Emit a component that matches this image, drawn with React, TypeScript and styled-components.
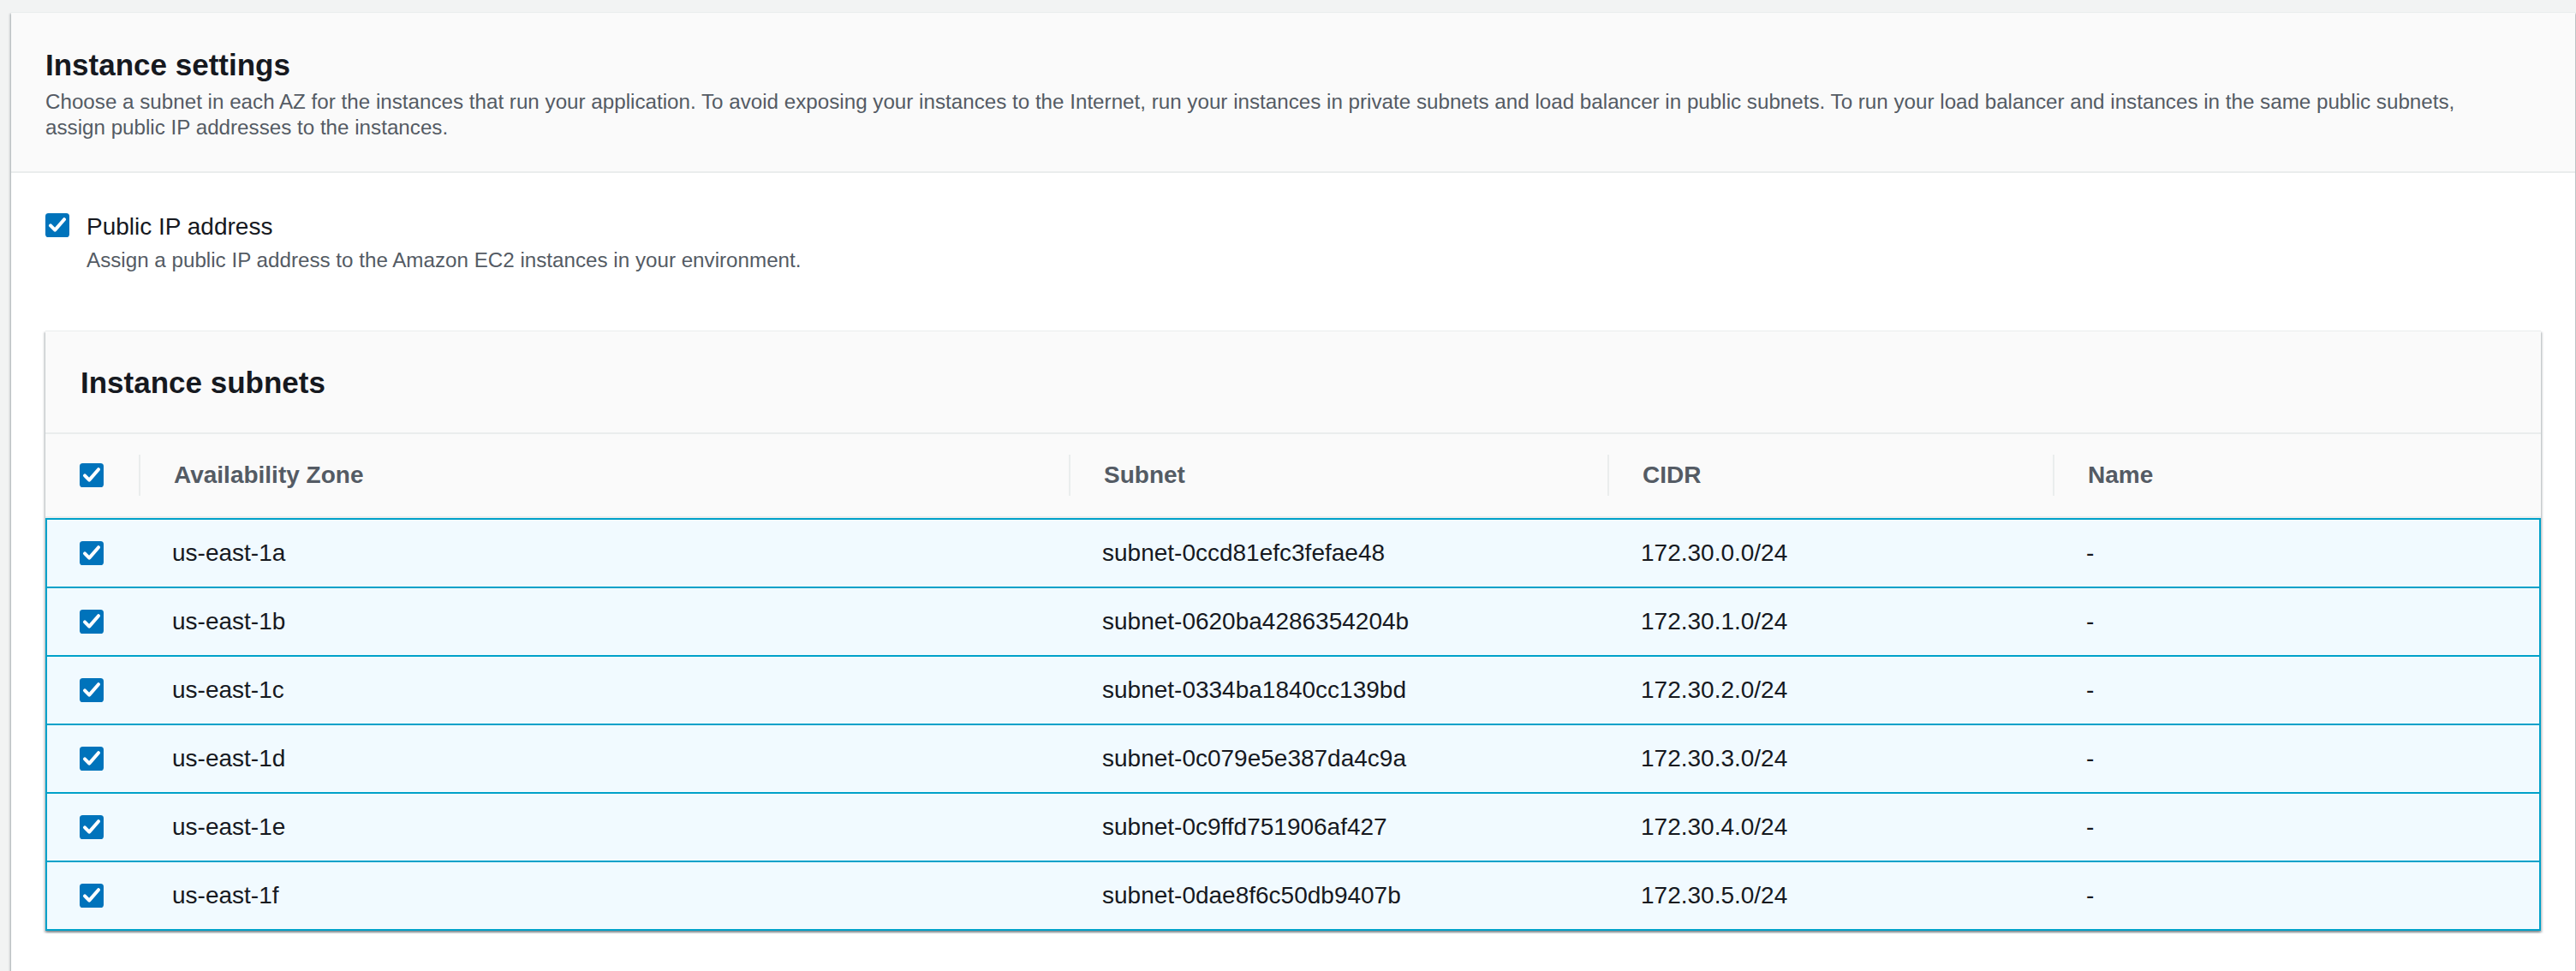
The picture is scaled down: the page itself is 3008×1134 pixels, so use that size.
import React from 'react';
import styled, { createGlobalStyle } from 'styled-components';

const GlobalStyle = createGlobalStyle`
  html, body {
    margin: 0;
    padding: 0;
    background: #f2f3f3;
    overflow: hidden;
  }
  body {
    font-family: 'Liberation Sans', Arial, sans-serif;
    color: #16191f;
  }
  * {
    box-sizing: border-box;
  }
`;

const Page = styled.div`
  padding: 14px 1px 0 13px;
  height: 1134px;
`;

const Panel = styled.section`
  background: white;
  border-top: 1px solid #eaeded;
  box-shadow: 0 2px 2px 0 rgba(0, 28, 36, 0.3), 2px 2px 2px 0 rgba(0, 28, 36, 0.15),
    -2px 2px 2px 0 rgba(0, 28, 36, 0.15);
  padding-bottom: 80px;
`;

const PanelHeader = styled.div`
  background: #fafafa;
  padding: 39px 40px 36px;
  border-bottom: 2px solid #eaeded;
`;

const Title = styled.h2`
  margin: 0;
  font-size: 35px;
  line-height: 44px;
  font-weight: 700;
  color: #16191f;
`;

const Description = styled.p<{ $gap?: number }>`
  margin: ${(p) => p.$gap ?? 6}px 0 0;
  max-width: 2860px;
  font-size: 24.2px;
  line-height: 30px;
  color: #545b64;
`;

const PanelBody = styled.div`
  padding: 43px 40px 0;
`;

const CheckField = styled.div`
  display: flex;
  align-items: flex-start;
  gap: 20px;
`;

const CheckText = styled.div`
  display: flex;
  flex-direction: column;
`;

const Label = styled.span`
  font-size: 28px;
  line-height: 40px;
  color: #16191f;
`;

const Box = styled.span<{ $offset?: number }>`
  display: inline-flex;
  width: 28px;
  height: 28px;
  flex: none;
  margin-top: ${(p) => p.$offset ?? 0}px;
`;

const Container = styled.div`
  margin-top: 67px;
  background: white;
  border-top: 1px solid #eaeded;
  box-shadow: 0 2px 2px 0 rgba(0, 28, 36, 0.3), 2px 2px 2px 0 rgba(0, 28, 36, 0.15),
    -2px 2px 2px 0 rgba(0, 28, 36, 0.15);
`;

const ContainerHeader = styled.div`
  background: #fafafa;
  padding: 38px 40px 36px 41px;
  border-bottom: 2px solid #eaeded;
`;

const Row = styled.div<{ $selected?: boolean; $last?: boolean }>`
  display: grid;
  grid-template-columns: 109px 1086px 629px 520px 1fr;
  align-items: center;
  height: ${(p) => (p.$selected ? (p.$last ? 82 : 80) : 98)}px;
  background: ${(p) => (p.$selected ? '#f1faff' : '#fafafa')};
  border-bottom: 2px solid ${(p) => (p.$selected && p.$last ? '#00a1c9' : '#eaeded')};
  ${(p) =>
    p.$selected &&
    `
    border-top: 2px solid #00a1c9;
    border-left: 2px solid #00a1c9;
    border-right: 2px solid #00a1c9;
    grid-template-columns: 107px 1086px 629px 520px 1fr;
  `}
  ${(p) => p.$selected && !p.$last && 'border-bottom: none;'}
`;

const SelectCell = styled.div<{ $pad: number }>`
  display: flex;
  padding-left: ${(p) => p.$pad}px;
`;

const HeadCell = styled.div`
  height: 48px;
  display: flex;
  align-items: center;
  border-left: 2px solid #eaeded;
  padding-left: 39px;
  font-size: 28px;
  font-weight: 700;
  color: #545b64;
`;

const Cell = styled.div`
  padding-left: 39px;
  font-size: 28px;
  line-height: 36px;
  color: #16191f;
  white-space: nowrap;
`;

const Checkbox = ({ offset }: { offset?: number }) => (
  <Box $offset={offset}>
    <svg width="28" height="28" viewBox="0 0 14 14">
      <rect x="0" y="0" width="14" height="14" rx="1.8" fill="#0073bb" />
      <polyline
        points="3,7.2 5.6,9.8 11,3.6"
        fill="none"
        stroke="white"
        strokeWidth="2"
        strokeLinecap="round"
        strokeLinejoin="round"
      />
    </svg>
  </Box>
);

const subnets = [
  { az: 'us-east-1a', id: 'subnet-0ccd81efc3fefae48', cidr: '172.30.0.0/24' },
  { az: 'us-east-1b', id: 'subnet-0620ba4286354204b', cidr: '172.30.1.0/24' },
  { az: 'us-east-1c', id: 'subnet-0334ba1840cc139bd', cidr: '172.30.2.0/24' },
  { az: 'us-east-1d', id: 'subnet-0c079e5e387da4c9a', cidr: '172.30.3.0/24' },
  { az: 'us-east-1e', id: 'subnet-0c9ffd751906af427', cidr: '172.30.4.0/24' },
  { az: 'us-east-1f', id: 'subnet-0dae8f6c50db9407b', cidr: '172.30.5.0/24' },
];

const App = () => {
  return (
    <Page>
      <GlobalStyle />
      <Panel>
        <PanelHeader>
          <Title>Instance settings</Title>
          <Description>
            Choose a subnet in each AZ for the instances that run your application. To avoid exposing your
            instances to the Internet, run your instances in private subnets and load balancer in public subnets.
            To run your load balancer and instances in the same public subnets, assign public IP addresses to the
            instances.
          </Description>
        </PanelHeader>
        <PanelBody>
          <CheckField>
            <Checkbox offset={4} />
            <CheckText>
              <Label>Public IP address</Label>
              <Description $gap={4}>Assign a public IP address to the Amazon EC2 instances in your environment.</Description>
            </CheckText>
          </CheckField>

          <Container>
            <ContainerHeader>
              <Title>Instance subnets</Title>
            </ContainerHeader>
            <Row>
              <SelectCell $pad={40}>
                <Checkbox />
              </SelectCell>
              <HeadCell>Availability Zone</HeadCell>
              <HeadCell>Subnet</HeadCell>
              <HeadCell>CIDR</HeadCell>
              <HeadCell>Name</HeadCell>
            </Row>
            {subnets.map((s, i) => (
              <Row key={s.id} $selected $last={i === subnets.length - 1}>
                <SelectCell $pad={38}>
                  <Checkbox />
                </SelectCell>
                <Cell>{s.az}</Cell>
                <Cell>{s.id}</Cell>
                <Cell>{s.cidr}</Cell>
                <Cell>-</Cell>
              </Row>
            ))}
          </Container>
        </PanelBody>
      </Panel>
    </Page>
  );
};

export default App;
